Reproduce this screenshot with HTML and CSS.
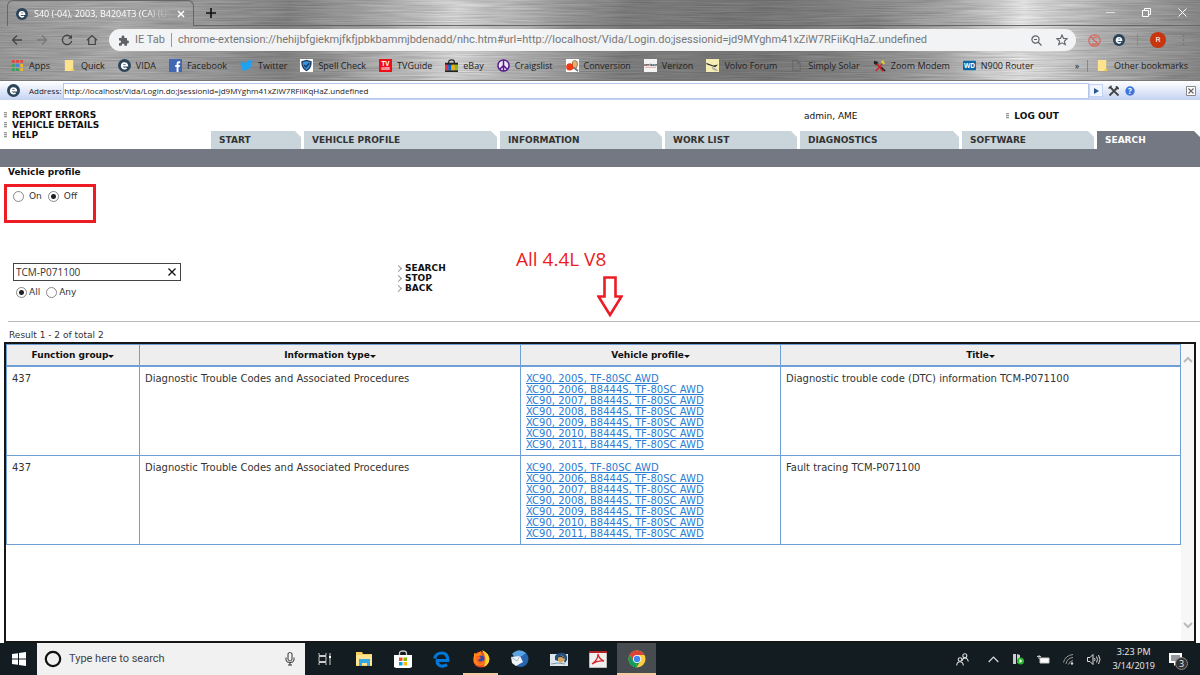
FILE: index.html
```html
<!DOCTYPE html>
<html lang="en">
<head>
	<meta charset="UTF-8">
	<meta name="viewport" content="width=device-width, initial-scale=1.0">
	<title>VIDA - Search</title>
	<link rel="stylesheet" href="styles.css">
</head>
<body>

	<!-- shared icons -->
	<svg class="defs" width="0" height="0" aria-hidden="true">
		<symbol id="i-vida" viewBox="0 0 14 14">
			<circle cx="7" cy="7" r="7" fill="#2b4459"/>
			<path d="M4 7.2h6A3 3 0 1 0 9.200 9.400" fill="none" stroke="#fff" stroke-width="1.900"/>
		</symbol>
		<symbol id="i-folder" viewBox="0 0 14 14">
			<path d="M2 1h9v10h1v2H2z" fill="#ffe38c"/>
			<path d="M9 11h3v2H9z" fill="#f3c84f"/>
		</symbol>
	</svg>

	<header class="chrome">
		<svg class="chrome-metal" width="100%" height="100%" aria-hidden="true">
			<filter id="brushed" x="0" y="0" width="100%" height="100%">
				<feTurbulence type="fractalNoise" baseFrequency="0.02 0.8" numOctaves="2" seed="4"/>
				<feColorMatrix type="matrix" values="0 0 0 0 0  0 0 0 0 0  0 0 0 0 0  .3 0 0 0 -0.07"/>
			</filter>
			<rect width="100%" height="100%" filter="url(#brushed)"/>
		</svg>

		<div class="tabstrip">
			<div class="tab">
				<svg class="icon-12"><use href="#i-vida"/></svg>
				<span class="tab-title">S40 (-04), 2003, B4204T3 (CA) (US)</span>
				<button class="plain" type="button" aria-label="Close tab">
					<svg width="8" height="8" viewBox="0 0 8 8"><path d="M1 1l6 6M7 1L1 7" stroke="#fff" stroke-width="1.500"/></svg>
				</button>
			</div>
			<div class="tabstrip-rest">
				<button class="plain" type="button" aria-label="New tab">
					<svg width="10" height="10" viewBox="0 0 10 10"><path d="M5 0v10M0 5h10" stroke="#111" stroke-width="1.600"/></svg>
				</button>
				<div class="window-buttons">
					<button class="plain" type="button" aria-label="Minimize"><svg width="9" height="9" viewBox="0 0 9 9"><path d="M0 4.500h9" stroke="#ddd"/></svg></button>
					<button class="plain" type="button" aria-label="Restore"><svg width="9" height="9" viewBox="0 0 9 9"><path d="M.5 2.500h6v6h-6zM2.500 2V.5h6v6H7" fill="none" stroke="#fff"/></svg></button>
					<button class="plain" type="button" aria-label="Close"><svg width="9" height="9" viewBox="0 0 9 9"><path d="M.5.5l8 8M8.500.5l-8 8" stroke="#fff"/></svg></button>
				</div>
			</div>
		</div>

		<div class="toolbar">
			<button class="plain nav" type="button" aria-label="Back"><svg width="12" height="12" viewBox="0 0 12 12"><path d="M11 6H2M6 1.500L1.500 6 6 10.500" fill="none" stroke="#444" stroke-width="1.300"/></svg></button>
			<button class="plain nav" type="button" aria-label="Forward"><svg width="12" height="12" viewBox="0 0 12 12"><path d="M1 6h9M6 1.500L10.500 6 6 10.500" fill="none" stroke="#777" stroke-width="1.300"/></svg></button>
			<button class="plain nav" type="button" aria-label="Reload"><svg width="12" height="12" viewBox="0 0 12 12"><path d="M10 3.300A4.700 4.700 0 1 0 10.700 7" fill="none" stroke="#444" stroke-width="1.300"/><path d="M11 .8v4H7z" fill="#444"/></svg></button>
			<button class="plain nav" type="button" aria-label="Home"><svg width="12" height="12" viewBox="0 0 12 12"><path d="M1 6.200L6 1.500l5 4.700M2.700 5v5.500h6.600V5" fill="none" stroke="#444" stroke-width="1.200"/></svg></button>
			<div class="omnibox">
				<svg width="11" height="11" viewBox="0 0 11 11"><path d="M1 3h2.600V2a1.400 1.400 0 0 1 2.800 0v1H9v2.600h.6a1.400 1.400 0 0 1 0 2.800H9v2.400H6.400V10a1.300 1.300 0 0 0-2.600 0v.8H1V8h.8a1.200 1.200 0 0 0 0-2.400H1z" fill="#5f6368"/></svg>
				<span class="omnibox-name">IE Tab</span>
				<input class="omnibox-url" type="text" aria-label="Address and search bar" value="chrome-extension://hehijbfgiekmjfkfjpbkbammjbdenadd/nhc.htm#url=http://localhost/Vida/Login.do;jsessionid=jd9MYghm41xZiW7RFiiKqHaZ.undefined">
				<button class="plain" type="button" aria-label="Zoom"><svg width="11" height="11" viewBox="0 0 11 11"><circle cx="4.500" cy="4.500" r="3.600" fill="none" stroke="#5f6368" stroke-width="1.200"/><path d="M7 7l3.500 3.500M3 4.500h3" stroke="#5f6368" stroke-width="1.200"/></svg></button>
				<button class="plain" type="button" aria-label="Bookmark this page"><svg width="12" height="12" viewBox="0 0 12 12"><path d="M6 1l1.500 3.400 3.700.3-2.800 2.400.9 3.600L6 8.800l-3.300 1.900.9-3.600L.8 4.700l3.700-.3z" fill="none" stroke="#5f6368" stroke-width="1.100"/></svg></button>
			</div>
			<div class="extensions">
				<svg width="13" height="13" viewBox="0 0 13 13"><g fill="none" stroke="#d9675c" stroke-width="1.200"><circle cx="6.500" cy="6.500" r="5.700"/><path d="M2.500 2.500l8 8M9 3.500C6 2.500 4 4 5.500 6s4 1 3 3-3 1.500-5 .5"/></g></svg>
				<svg class="icon-12"><use href="#i-vida"/></svg>
				<span class="divider"></span>
				<button class="avatar" type="button">R</button>
				<svg width="3" height="12" viewBox="0 0 3 12" fill="#777"><circle cx="1.500" cy="2" r="1"/><circle cx="1.500" cy="6" r="1"/><circle cx="1.500" cy="10" r="1"/></svg>
			</div>
		</div>

		<nav class="bookmarks">
			<a href="#"><svg viewBox="0 0 14 14"><path d="M1 1h3v3H1zM10 1h3v3h-3zM5.500 1h3v3h-3z" fill="#e6453a"/><path d="M1 5.500h3v3H1z" fill="#35a553"/><path d="M5.500 5.500h3v3h-3z" fill="#3f83f0"/><path d="M10 5.500h3v3h-3zM10 10h3v3h-3z" fill="#f5b820"/><path d="M1 10h3v3H1zM5.500 10h3v3h-3z" fill="#35a553"/></svg>Apps</a>
			<a href="#"><svg><use href="#i-folder"/></svg>Quick</a>
			<a href="#"><svg><use href="#i-vida"/></svg>VIDA</a>
			<a href="#"><svg viewBox="0 0 14 14"><path d="M0 0h14v14H0z" fill="#4267b2"/><path d="M12 3.500h-1.500q-1.300 0-1.300 1.300V14M6.700 7.500h5" fill="none" stroke="#fff" stroke-width="2"/></svg>Facebook</a>
			<a href="#"><svg viewBox="0 0 14 14"><path d="M0 11.200c1.700.1 3-.3 4-1.200-1.300-.1-2.200-.8-2.600-2h1.200C1.200 7.400.5 6.400.5 5l1.200.3C.5 4.300.2 2.900 1 1.600 2.600 3.500 4.500 4.500 6.900 4.700 6.400 2.300 8 1 9.700 1q1.300 0 2.100.9l1.800-.7q-.3 1-1.200 1.600l1.600-.4-1.400 1.500C12.500 10 7.500 14.500 0 11.200z" fill="#1da1f2"/></svg>Twitter</a>
			<a href="#"><svg viewBox="0 0 14 14"><path d="M0 0h14v14H0z" fill="#fff"/><path d="M7 .8l5.500 1.600c.4 5-1.400 8.800-5.500 10.800C2.900 11.200 1.100 7.400 1.500 2.400z" fill="#24405f"/><path d="M7 2.500l4 1c.2 3.500-1 6.200-4 8-3-1.800-4.200-4.500-4-8z" fill="#3795e8"/><path d="M4.500 6.500L6.500 8.500l3.500-4" fill="none" stroke="#1b3854" stroke-width="1.500"/></svg>Spell Check</a>
			<a href="#"><svg viewBox="0 0 14 14"><path d="M0 0h14v14H0z" fill="#f20d14"/><text x="7" y="7.500" text-anchor="middle" font-size="7" font-weight="700" fill="#fff">TV</text><text x="7" y="11.500" text-anchor="middle" font-size="3" font-weight="700" fill="#fff">GUIDE</text></svg>TVGuide</a>
			<a href="#"><svg viewBox="0 0 14 14"><path d="M4 5V3q0-2 3-2t3 2v2" fill="none" stroke="#222" stroke-width="1.300"/><path d="M0 4h14v3H0zM0 12h14v2H0z" fill="#222"/><path d="M0 6h3.500v6H0z" fill="#e53238"/><path d="M3.500 6H7v6H3.500z" fill="#0064d2"/><path d="M7 6h3.500v6H7z" fill="#f5af02"/><path d="M10.500 6H14v6h-3.500z" fill="#86b817"/></svg>eBay</a>
			<a href="#"><svg viewBox="0 0 14 14"><circle cx="7" cy="7" r="6" fill="#eee6f4" stroke="#551a8b" stroke-width="1.600"/><path d="M7 1v12M7 7l-4.300 4.300M7 7l4.300 4.300" stroke="#551a8b" stroke-width="1.600"/></svg>Craigslist</a>
			<a href="#"><svg viewBox="0 0 14 14"><path d="M0 0h14v14H0z" fill="#fff"/><path d="M7 3q2-3 5 0 1 4-1 7H7z" fill="#e7b36b" stroke="#8b7357"/><path d="M8 9l5 4" stroke="#777" stroke-width="2"/><circle cx="4" cy="8.500" r="3.800" fill="#ef3a14"/></svg>Conversion</a>
			<a href="#"><svg viewBox="0 0 14 14"><path d="M0 0h14v14H0z" fill="#f4f4f4"/><text x="7" y="8" text-anchor="middle" font-size="4" font-weight="700" fill="#222">verizon</text><path d="M1 9h12" stroke="#c55" stroke-width=".5"/></svg>Verizon</a>
			<a href="#"><svg viewBox="0 0 14 14"><path d="M0 0h14v14H0z" fill="#f6edb5"/><path d="M0 4l8 3 5-1-3 3-9-3z" fill="#333"/><path d="M6 8l7 4-2 1-4-2z" fill="#aaa"/></svg>Volvo Forum</a>
			<a href="#"><svg viewBox="0 0 14 14"><path d="M3 1.500h5l3 3v8H3zM8 1.500v3h3" fill="none" stroke="#666"/></svg>Simply Solar</a>
			<a href="#"><svg viewBox="0 0 14 14"><path d="M1 2l4 1 1 3-2 1-3-2z" fill="#222"/><path d="M4 5l7 8" stroke="#c9252b" stroke-width="2"/><path d="M8 3l3-2 2 4-2 1z" fill="#e6c62e"/><path d="M10 5l-7 8" stroke="#c9252b" stroke-width="1.500"/><path d="M9 9l4 4" stroke="#222" stroke-width="1.500"/></svg>Zoom Modem</a>
			<a href="#"><svg viewBox="0 0 14 14"><rect y="2" width="14" height="10" rx="1" fill="#0e67a6"/><text x="7" y="9.500" text-anchor="middle" font-size="7" font-weight="700" fill="#fff">WD</text></svg>N900 Router</a>
			<button class="plain overflow" type="button" aria-label="More bookmarks">»</button>
			<span class="divider"></span>
			<a class="other" href="#"><svg><use href="#i-folder"/></svg>Other bookmarks</a>
		</nav>
	</header>

	<form class="ietab">
		<svg class="icon-13"><use href="#i-vida"/></svg>
		<label for="ietab-url">Address:</label>
		<input id="ietab-url" type="text" value="http://localhost/Vida/Login.do;jsessionid=jd9MYghm41xZiW7RFiiKqHaZ.undefined">
		<button class="plain ietab-go" type="button" aria-label="Go"><svg width="5" height="6" viewBox="0 0 5 6"><path d="M0 0l5 3-5 3z" fill="#2b5797"/></svg></button>
		<button class="plain" type="button" aria-label="Options"><svg width="12" height="12" viewBox="0 0 12 12"><path d="M2 2l8.500 8.500M10 2l-8.500 8.500" stroke="#444" stroke-width="1.800"/><path d="M.5 3.500L3.500.8M8.500 1v2.500H11" fill="none" stroke="#444" stroke-width="1.500"/></svg></button>
		<button class="plain" type="button" aria-label="Help"><svg width="10" height="10" viewBox="0 0 10 10"><circle cx="5" cy="5" r="4.700" fill="#3f78dd"/><text x="5" y="8" text-anchor="middle" font-size="8" font-weight="700" fill="#fff">?</text></svg></button>
		<button class="plain ietab-close" type="button" aria-label="Close bar"><svg width="10" height="10" viewBox="0 0 10 10"><path d="M.5.5h9v9h-9z" fill="#fff" stroke="#888"/><path d="M2.500 2.500l5 5M7.500 2.500l-5 5" stroke="#666" stroke-width="1.200"/></svg></button>
	</form>

	<main class="vida">
		<div class="vida-top">
			<ul class="vida-links">
				<li><a href="#">REPORT ERRORS</a></li>
				<li><a href="#">VEHICLE DETAILS</a></li>
				<li><a href="#">HELP</a></li>
			</ul>
			<div class="vida-right">
				<div class="vida-user">
					<span>admin, AME</span>
					<a class="logout" href="#">LOG OUT</a>
				</div>
				<nav class="vida-tabs">
					<a href="#">START</a>
					<a href="#">VEHICLE PROFILE</a>
					<a href="#">INFORMATION</a>
					<a href="#">WORK LIST</a>
					<a href="#">DIAGNOSTICS</a>
					<a href="#">SOFTWARE</a>
					<a class="active" href="#">SEARCH</a>
				</nav>
			</div>
		</div>
		<div class="vida-bar"></div>

		<form class="search">
			<h1>Vehicle profile</h1>
			<div class="profile-toggle">
				<label><input type="radio" name="profile" value="on"> On</label>
				<label><input type="radio" name="profile" value="off" checked> Off</label>
			</div>
			<div class="search-row">
				<div class="search-fields">
					<div class="search-box">
						<input type="text" name="query" aria-label="Search text" value="TCM-P071100">
						<button class="plain" type="button" aria-label="Clear"><svg width="8" height="8" viewBox="0 0 8 8"><path d="M.5.5l7 7M7.500.5l-7 7" stroke="#111" stroke-width="1.300"/></svg></button>
					</div>
					<div class="match">
						<label><input type="radio" name="match" value="all" checked>All</label>
						<label><input type="radio" name="match" value="any">Any</label>
					</div>
				</div>
				<div class="search-actions">
					<button class="plain" type="button">SEARCH</button>
					<button class="plain" type="button">STOP</button>
					<button class="plain" type="button">BACK</button>
				</div>
			</div>
			<div class="note">
				<span>All 4.4L V8</span>
				<svg width="26" height="41" viewBox="0 0 26 41"><path d="M7.500 1.500h11v19h6L13 39 1.500 20.500h6z" fill="#fff" stroke="#ed1c24" stroke-width="2.600"/></svg>
			</div>
		</form>

		<p class="result-count">Result 1 - 2 of total 2</p>

		<div class="results">
			<div class="results-body">
				<table>
					<colgroup><col class="col-group"><col class="col-type"><col class="col-profile"><col></colgroup>
					<thead>
						<tr>
							<th>Function group</th>
							<th>Information type</th>
							<th>Vehicle profile</th>
							<th>Title</th>
						</tr>
					</thead>
					<tbody>
						<tr>
							<td>437</td>
							<td>Diagnostic Trouble Codes and Associated Procedures</td>
							<td>
								<a href="#">XC90, 2005, TF-80SC AWD</a><br>
								<a href="#">XC90, 2006, B8444S, TF-80SC AWD</a><br>
								<a href="#">XC90, 2007, B8444S, TF-80SC AWD</a><br>
								<a href="#">XC90, 2008, B8444S, TF-80SC AWD</a><br>
								<a href="#">XC90, 2009, B8444S, TF-80SC AWD</a><br>
								<a href="#">XC90, 2010, B8444S, TF-80SC AWD</a><br>
								<a href="#">XC90, 2011, B8444S, TF-80SC AWD</a>
							</td>
							<td>Diagnostic trouble code (DTC) information TCM-P071100</td>
						</tr>
						<tr>
							<td>437</td>
							<td>Diagnostic Trouble Codes and Associated Procedures</td>
							<td>
								<a href="#">XC90, 2005, TF-80SC AWD</a><br>
								<a href="#">XC90, 2006, B8444S, TF-80SC AWD</a><br>
								<a href="#">XC90, 2007, B8444S, TF-80SC AWD</a><br>
								<a href="#">XC90, 2008, B8444S, TF-80SC AWD</a><br>
								<a href="#">XC90, 2009, B8444S, TF-80SC AWD</a><br>
								<a href="#">XC90, 2010, B8444S, TF-80SC AWD</a><br>
								<a href="#">XC90, 2011, B8444S, TF-80SC AWD</a>
							</td>
							<td>Fault tracing TCM-P071100</td>
						</tr>
					</tbody>
				</table>
			</div>
			<div class="scrollbar">
				<svg width="10" height="7" viewBox="0 0 10 7"><path d="M1 6l4-4 4 4" fill="none" stroke="#bbb" stroke-width="2"/></svg>
				<svg width="10" height="7" viewBox="0 0 10 7"><path d="M1 1l4 4 4-4" fill="none" stroke="#bbb" stroke-width="2"/></svg>
			</div>
		</div>
	</main>

	<footer class="taskbar">
		<button class="plain start" type="button" aria-label="Start"><svg width="14" height="14" viewBox="0 0 14 14"><path d="M0 2l6-.8v5.400H0zM7 1l7-1v6.600H7zM0 7.400h6v5.400L0 12zM7 7.400h7V14l-7-1z" fill="#fff"/></svg></button>
		<label class="taskbar-search">
			<svg width="18" height="18" viewBox="0 0 18 18"><circle cx="9" cy="9" r="7.200" fill="none" stroke="#111" stroke-width="2.200"/></svg>
			<input type="text" aria-label="Search Windows" placeholder="Type here to search">
			<svg width="10" height="14" viewBox="0 0 10 14"><rect x="3" y=".6" width="4" height="8" rx="1.500" fill="none" stroke="#333"/><path d="M1 5.500V8q0 2.500 4 2.500T9 8V5.500M5 10.500V13M3 13h4" fill="none" stroke="#333"/></svg>
		</label>
		<div class="apps">
			<button class="plain" type="button" aria-label="Task View"><svg width="14" height="12" viewBox="0 0 14 12"><path d="M1 0v2.500h7V0M1 12V9.500h7V12M1 3.500h7v5H1zM12 0v12" fill="none" stroke="#ccc"/><path d="M11 3h2v2h-2z" fill="#fff"/></svg></button>
			<button class="plain" type="button" aria-label="File Explorer"><svg width="18" height="16" viewBox="0 0 18 16"><path d="M1 1h6l1 2h9v12H1z" fill="#f7cf5c"/><path d="M1 4h16v10H1z" fill="#ffe591"/><path d="M4 15V8h11v7h-3v-3H7v3z" fill="#35a9e4"/></svg></button>
			<button class="plain" type="button" aria-label="Store"><svg width="18" height="19" viewBox="0 0 18 19"><path d="M5.500 5V3q0-2 3.500-2t3.500 2v2" fill="none" stroke="#ccc" stroke-width="1.300"/><path d="M0 5h18v12l-2 1H2l-2-1z" fill="#fff"/><path d="M5 7.500h3.500V11H5z" fill="#f25022"/><path d="M9.500 7.500H13V11H9.500z" fill="#7fba00"/><path d="M5 12h3.500v3.500H5z" fill="#00a4ef"/><path d="M9.500 12H13v3.500H9.500z" fill="#ffb900"/></svg></button>
			<button class="plain" type="button" aria-label="Edge"><svg width="17" height="17" viewBox="0 0 17 17"><path d="M4.500 9.500h10.300C15 4.500 12.500 2 8.800 2 5.500 2 2.500 4 1.500 7.500M4.800 8C2.500 14 8.500 17 14 13.700" fill="none" stroke="#0078d7" stroke-width="3.200"/></svg></button>
			<button class="plain open" type="button" aria-label="Firefox"><svg width="18" height="18" viewBox="0 0 18 18"><circle cx="9" cy="9.500" r="8" fill="#f3442e"/><path d="M10 0q7 3 7.500 9-.5 6-6 8Q16 9 10 0z" fill="#ffd335"/><path d="M2 3l3 1 4-3q-1 3 3 6 3 5-1 8-6 2-9-3z" fill="#ff8a16"/><circle cx="9" cy="9" r="3.500" fill="#3446a8"/><path d="M4 6q3-1 5 2l-3 2q2 3 6 0-1 5-5 4-4-2-3-8z" fill="#ff6420"/></svg></button>
			<button class="plain" type="button" aria-label="Thunderbird"><svg width="19" height="18" viewBox="0 0 19 18"><circle cx="10.500" cy="9" r="8" fill="#2766af"/><path d="M2 4q7-7 14-1l-4 3-7 1z" fill="#59a3e1"/><path d="M1 7l9-1 3 6-7 4-4-3z" fill="#f1f5f9"/><path d="M1 7l6 4 3-5" fill="none" stroke="#a9bdce"/></svg></button>
			<button class="plain" type="button" aria-label="Mail backup"><svg width="18" height="15" viewBox="0 0 18 15"><path d="M0 2h18v12H0z" fill="#dce6ed"/><path d="M5 4q3-4 9-3 4 2 3 7l-2 3-2-4-5 2-3-1z" fill="#254e82"/><path d="M8 5q4-3 6 0l1 3-4 3-3-2z" fill="#d4a65e"/><path d="M8 5q3-2 6 1" fill="none" stroke="#17304f"/><path d="M1 12l7-1 7 1" fill="none" stroke="#8097aa"/></svg></button>
			<button class="plain" type="button" aria-label="Acrobat Reader"><svg width="18" height="17" viewBox="0 0 18 17"><path d="M.5.5h17v16H.5z" fill="#eee" stroke="#bbb"/><path d="M0 0h18v2H0z" fill="#b42025"/><path d="M9 3q1 5 6 7-6-1-12 3 6-4 6-10z" fill="none" stroke="#d5282e" stroke-width="1.300"/></svg></button>
			<button class="plain open current" type="button" aria-label="Chrome"><svg width="18" height="18" viewBox="0 0 18 18"><circle cx="9" cy="9" r="8.500" fill="#ffcd40"/><path d="M1.600 4.700A8.500 8.500 0 0 1 16.400 5H9L5.500 11z" fill="#db4437"/><path d="M1.600 4.700L5.500 11 9 13l-1.300 4.400A8.500 8.500 0 0 1 1.600 4.700z" fill="#0f9d58"/><path d="M9 13l3.500-2-4 6.500h-.8z" fill="#0f9d58"/><circle cx="9" cy="9" r="4" fill="#fff"/><circle cx="9" cy="9" r="3.200" fill="#4285f4"/></svg></button>
		</div>
		<div class="tray">
			<svg width="13" height="13" viewBox="0 0 13 13"><g fill="none" stroke="#ddd" stroke-width="1.100"><circle cx="8.800" cy="2.700" r="2"/><path d="M6 8q.5-3 3-3t3.300 3.500"/><circle cx="4" cy="6.500" r="1.800"/><path d="M.7 12.500Q1 8.700 4 8.700t3.300 3.800"/></g></svg>
			<svg width="11" height="7" viewBox="0 0 11 7"><path d="M.7 6l4.800-4.800L10.300 6" fill="none" stroke="#ddd" stroke-width="1.200"/></svg>
			<svg width="12" height="12" viewBox="0 0 12 12"><path d="M1 1h3v10H1zM5 1l3 1v8H5z" fill="#ccc"/><circle cx="8.500" cy="8" r="3.500" fill="#2bb62b"/><path d="M7.500 6l3 2-3 2z" fill="#fff"/></svg>
			<svg width="13" height="9" viewBox="0 0 13 9"><path d="M3 3h9v5H3z" fill="#fff" stroke="#ccc"/><path d="M0 1.500h4M2 0v4" stroke="#ccc"/></svg>
			<svg width="11" height="12" viewBox="0 0 11 12"><g fill="none" stroke="#999"><path d="M.5 9.500Q2 2.500 10 1.500M3 11Q4 5 10 4.500M5.500 11.500Q6.500 8 10 7.500"/></g><circle cx="9" cy="10.500" r="1.200" fill="#ddd"/></svg>
			<svg width="14" height="11" viewBox="0 0 14 11"><g fill="none" stroke="#ddd"><path d="M.5 3.500H3l3-3v10l-3-3H.5z"/><path d="M7.500 4q1 1.500 0 3M9.500 2.500q2 3 0 6M11.500 1q3 4.500 0 9"/></g></svg>
			<div class="clock"><span>3:23 PM</span><span>3/14/2019</span></div>
			<button class="plain notifications" type="button" aria-label="Notifications"><svg width="13" height="13" viewBox="0 0 13 13"><path d="M0 0h13v10H8l-3 3v-3H0z" fill="#fff"/><path d="M2 3h9M2 5h9M2 7h6" stroke="#334"/></svg><span class="badge">3</span></button>
		</div>
	</footer>

</body>
</html>
```
FILE: styles.css
```css
* {
	box-sizing: border-box;
}
body {
	display: flex;
	flex-direction: column;
	min-height: 100vh;
	margin: 0;
	background: #fff;
	color: #333;
	font: 9px/11px "DejaVu Sans", Verdana, sans-serif;
}
a {
	color: inherit;
	text-decoration: none;
}
svg {
	flex: none;
}
input {
	min-width: 0;
	margin: 0;
	padding: 0;
	border: 0;
	outline: 0;
	background: none;
	color: inherit;
	font: inherit;
}
.plain {
	display: flex;
	align-items: center;
	justify-content: center;
	padding: 0;
	border: 0;
	background: none;
	color: inherit;
	font: inherit;
}
.defs {
	position: absolute;
}
.icon-12 {
	width: 12px;
	height: 12px;
}
.icon-13 {
	width: 13px;
	height: 13px;
}
.divider {
	width: 1px;
	height: 12px;
	background: #888;
}

/* browser window */
.chrome {
	position: relative;
	z-index: 0;
	border-bottom: 1px solid #777;
	background: linear-gradient(94deg, #a0a0a0 0%, #b4b4b4 10%, #a2a2a2 17%, #8a8a8a 24%, #b0b0b0 31%, #e0e0e0 38%, #b0b0b0 45%, #858585 52%, #7e7e7e 64%, #929292 73%, #b4b4b4 79%, #ececec 85%, #b8b8b8 92%, #8e8e8e 100%);
	color: #222;
	font: 9px/14px "Open Sans", "Segoe UI", sans-serif;
}
.chrome-metal {
	position: absolute;
	inset: 0;
	z-index: -1;
}
.tabstrip {
	display: flex;
	height: 26px;
	padding-left: 7px;
}
.tab {
	display: flex;
	align-items: center;
	gap: 6px;
	width: 187px;
	padding: 0 8px;
	border: 1px solid #666;
	border-bottom: 0;
	border-radius: 6px 6px 0 0;
	color: #fff;
}
.tab-title {
	flex: 1;
	overflow: hidden;
	white-space: nowrap;
	-webkit-mask-image: linear-gradient(90deg, #000 80%, transparent);
	mask-image: linear-gradient(90deg, #000 80%, transparent);
}
.tabstrip-rest {
	display: flex;
	flex: 1;
	align-items: center;
	justify-content: space-between;
	padding: 0 13px 0 12px;
	border-bottom: 1px solid #666;
}
.window-buttons {
	display: flex;
	gap: 27px;
}
.toolbar {
	display: flex;
	align-items: center;
	height: 28px;
	padding: 0 15px 0 11px;
}
.nav {
	width: 12px;
	margin-right: 13px;
}
.omnibox {
	display: flex;
	flex: 1;
	align-items: center;
	gap: 14px;
	height: 22px;
	margin-left: -2px;
	padding: 0 8px 0 9px;
	border-radius: 11px;
	background: #f1f3f4;
	color: #777;
	font: 11px/14px Roboto, "Segoe UI", sans-serif;
}
.omnibox-name {
	margin-left: -8px;
	padding-right: 6px;
	border-right: 1px solid #999;
}
.omnibox-url {
	flex: 1;
	margin-left: -8px;
}
.extensions {
	display: flex;
	align-items: center;
	gap: 12px;
	margin-left: 12px;
}
.avatar {
	width: 16px;
	height: 16px;
	margin-right: 4px;
	padding: 0;
	border: 0;
	border-radius: 50%;
	background: #c8360f;
	color: #fff;
	font: 8px/16px Roboto, sans-serif;
}
.bookmarks {
	display: flex;
	align-items: center;
	gap: 13px;
	height: 26px;
	padding: 0 12px 3px 11px;
	white-space: nowrap;
}
.bookmarks a {
	display: flex;
	align-items: center;
	gap: 5px;
}
.bookmarks a svg {
	width: 13px;
	height: 13px;
}
.bookmarks .divider,
.bookmarks .other {
	margin-left: -5px;
}
.overflow {
	margin-left: auto;
}

/* IE Tab address bar */
.ietab {
	display: flex;
	align-items: center;
	gap: 5px;
	height: 19px;
	padding: 0 4px 0 7px;
	background: linear-gradient(#fff, #c5d3f3);
	color: #222;
	font: 8px/12px "Open Sans", Arial, sans-serif;
}
.ietab label {
	margin-left: 4px;
}
.ietab input {
	flex: 1;
	align-self: stretch;
	margin: 2px -5px 1px -3px;
	border: 1px solid #b4c6ee;
	background: #fff;
}
.ietab-go {
	width: 14px;
	height: 13px;
	border: 1px solid #c5d3f3;
	background: #f1f5fd;
}
.ietab-close {
	margin-left: 46px;
}

/* VIDA */
.vida {
	display: flex;
	flex: 1;
	flex-direction: column;
}
.vida-top {
	display: flex;
	height: 49px;
	color: #111;
	font-weight: 700;
}
.vida-links {
	width: 211px;
	margin: 0;
	padding: 10px 0 0 4px;
	line-height: 10px;
	list-style: none;
}
.vida-links a::before,
.logout::before {
	content: "";
	display: inline-block;
	width: 3px;
	height: 6px;
	margin-right: 5px;
	background: repeating-linear-gradient(#999 0 1px, #ddd 1px 2px);
}
.vida-right {
	display: flex;
	flex: 1;
	flex-direction: column;
	justify-content: space-between;
}
.vida-user {
	display: flex;
	justify-content: space-between;
	width: 255px;
	margin: 11px 141px 0 auto;
}
.vida-user span {
	font-weight: 400;
}
.vida-tabs {
	display: grid;
	grid-template-columns: 90fr 193fr 162fr 132fr 159fr 132fr 103fr;
	gap: 3px;
}
.vida-tabs a {
	padding-left: 8px;
	background: #c9d5db;
	clip-path: polygon(0 0, calc(100% - 6px) 0, 100% 6px, 100% 100%, 0 100%);
	color: #333;
	line-height: 18px;
}
.vida-tabs .active {
	background: #747882;
	color: #fff;
}
.vida-bar {
	height: 18px;
	background: #747882;
}
.search {
	position: relative;
	height: 155px;
	margin-left: 8px;
	border-bottom: 1px solid #bbb;
}
h1 {
	margin: 0;
	color: #111;
	font-size: 9px;
}
.profile-toggle {
	display: flex;
	gap: 6px;
	width: 92px;
	height: 39px;
	margin: 6px 0 0 -4px;
	padding: 4px 6px;
	border: 3px solid #ed1c24;
}
.search label {
	display: flex;
	align-items: center;
	height: 11px;
}
.profile-toggle label {
	gap: 5px;
}
input[type="radio"] {
	width: 11px;
	height: 11px;
	border: 1px solid #888;
	border-radius: 50%;
	appearance: none;
}
input[type="radio"]:checked {
	background: radial-gradient(#222 0 2px, transparent 3px);
}
.search-row {
	display: flex;
	align-items: flex-start;
	margin: 40px 0 0 5px;
}
.search-fields {
	width: 168px;
}
.search-box {
	display: flex;
	height: 18px;
	padding: 0 4px 0 2px;
	border: 1px solid #444;
	font: 10px/16px "Open Sans", sans-serif;
}
.search-box input {
	flex: 1;
}
.match {
	display: flex;
	gap: 6px;
	padding: 6px 3px;
}
.match label {
	gap: 2px;
}
.search-actions {
	margin-left: 215px;
	color: #111;
	font-weight: 700;
	line-height: 10px;
}
.search-actions button::before {
	content: "";
	width: 4px;
	height: 4px;
	margin-right: 4px;
	border: solid #999;
	border-width: 1px 1px 0 0;
	transform: rotate(45deg);
}
.note {
	position: absolute;
	top: 82px;
	left: 508px;
	color: #ed1c24;
	font: 19px/20px "Open Sans", Calibri, sans-serif;
}
.note svg {
	display: block;
	margin: 7px 0 0 81px;
}
.result-count {
	margin: 8px 9px 1px;
}
.results {
	display: flex;
	flex: 1;
	margin: 0 4px;
	border: 2px solid #161616;
}
.results-body {
	flex: 1;
}
table {
	width: 100%;
	border-collapse: collapse;
	table-layout: fixed;
}
.col-group {
	width: 133px;
}
.col-type {
	width: 381px;
}
.col-profile {
	width: 260px;
}
th,
td {
	border: 1px solid #6f9fd4;
	vertical-align: top;
}
th {
	padding: 5px 0 4px;
	border-bottom-width: 2px;
	background: #eee;
	color: #111;
}
th::after {
	content: "";
	display: inline-block;
	border: solid transparent;
	border-width: 3px 3px 0;
	border-top-color: #111;
}
td {
	padding: 6px 5px 5px;
	font-size: 10px;
}
td a {
	color: #2b7cd3;
	text-decoration: underline;
}
.scrollbar {
	display: flex;
	flex-direction: column;
	align-items: center;
	justify-content: space-between;
	width: 13px;
	padding: 12px 0;
	background: #f7f7f7;
}

/* Windows taskbar */
.taskbar {
	display: flex;
	height: 32px;
	background: #131c21;
	color: #eee;
	font: 9px/14px "Open Sans", "Segoe UI", sans-serif;
}
.start {
	width: 37px;
}
.taskbar-search {
	display: flex;
	align-items: center;
	gap: 7px;
	width: 268px;
	padding: 0 10px 0 7px;
	background: #f1f1f1;
	color: #444;
	font: 11px/14px Roboto, "Segoe UI", sans-serif;
}
.taskbar-search input {
	flex: 1;
}
.taskbar-search input::placeholder {
	color: #444;
}
.apps {
	display: flex;
}
.apps button {
	width: 39px;
	padding-top: 2px;
	border-bottom: 2px solid transparent;
}
.apps .open {
	border-image: linear-gradient(90deg, transparent 10%, #f6cba0 10% 90%, transparent 90%) 2;
}
.apps .current {
	border-image: none;
	border-color: #f6cba0;
	background: #474c50;
}
.tray {
	display: flex;
	align-items: center;
	gap: 13px;
	margin-left: auto;
	padding-right: 18px;
}
.tray > :first-child {
	margin-right: 6px;
}
.clock {
	display: flex;
	flex-direction: column;
	align-items: center;
	margin: 0 1px 0 -2px;
}
.notifications {
	position: relative;
}
.badge {
	position: absolute;
	top: 4px;
	left: 6px;
	width: 13px;
	height: 13px;
	border: 1px solid #888;
	border-radius: 50%;
	background: #333;
	font-size: 9px;
	line-height: 11px;
}
```
